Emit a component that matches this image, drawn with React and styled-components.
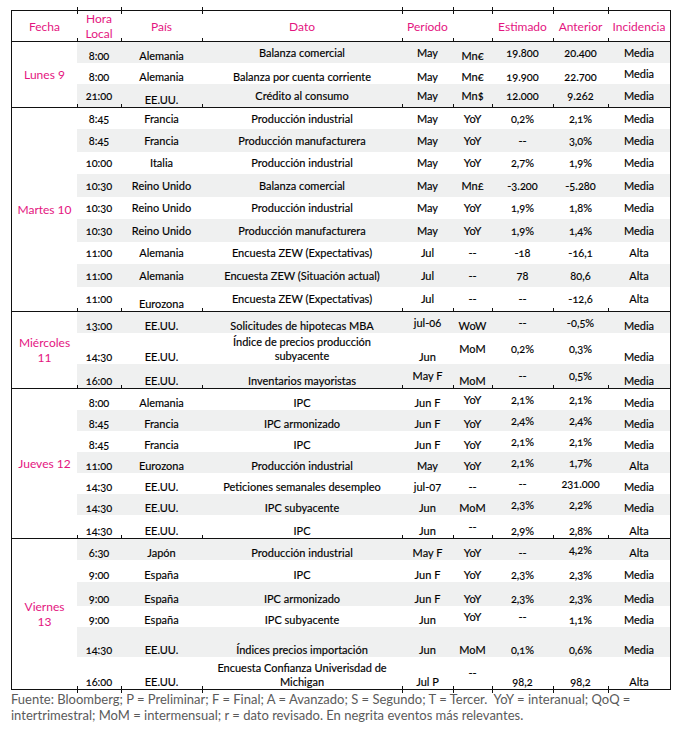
import React from "react";
import styled, { createGlobalStyle } from "styled-components";

const GlobalStyle = createGlobalStyle`
  body {
    margin: 0;
    background: #fff;
    font-family: Lato, "Open Sans", sans-serif;
  }
`;

const COLS = "65px 44px 81px 200px 51px 39px 61px 55px 62px";
const PINK = "#e4157f";

const Page = styled.div`
  padding: 10px 0 0 11px;
`;

const Table = styled.div`
  width: 658px;
  border-left: 1px solid #111;
  border-right: 1px solid #111;
`;

const Rule = styled.div`
  display: grid;
  grid-template-columns: ${COLS};
  grid-template-rows: 1px;
  height: 1px;
  background: #111;
`;

const Mark = styled.span`
  height: 7px;
  margin-top: -3px;
  border-left: 1px solid #111;
`;

const Header = styled.div`
  display: grid;
  grid-template-columns: ${COLS};
  height: 30px;
`;

const HeadCell = styled.div`
  display: flex;
  align-items: center;
  justify-content: center;
  text-align: center;
  color: ${PINK};
  font-size: 12px;
  line-height: 15px;
`;

const Group = styled.div`
  display: flex;
`;

const DayCell = styled.div`
  width: 65px;
  flex: none;
  display: flex;
  align-items: center;
  justify-content: center;
  text-align: center;
  color: ${PINK};
  font-size: 12px;
  line-height: 15px;
`;

const Rows = styled.div`
  flex: 1;
  display: flex;
  flex-direction: column;
`;

const Row = styled.div`
  display: grid;
  grid-template-columns: 44px 81px 200px 51px 39px 61px 55px 62px;
  height: ${(p) => p.$h}px;
  background: ${(p) => (p.$shade ? "#eff0f0" : "#fff")};
`;

const Cell = styled.div`
  align-self: ${(p) => (p.$bottom ? "end" : "center")};
  text-align: center;
  font-size: 11px;
  line-height: 14px;
  color: #000;
  -webkit-text-stroke: 0.15px #000;
  white-space: nowrap;
  font-variant-numeric: oldstyle-nums;
`;

const Note = styled.p`
  margin: 1px 0 0;
  font-size: 13px;
  line-height: 16px;
  color: #5a5a5a;
`;

const ALL = [0, 1, 2, 3, 4, 5, 6, 7];
const except = (...xs) => ALL.filter((i) => !xs.includes(i));

const days = [
  {
    label: ["Lunes 9"],
    rows: [
      { h: 21, c: ["8:00", "Alemania", "Balanza comercial", "May", "Mn€", "19.800", "20.400", "Media"], b: [0, 1, 4] },
      { h: 21, c: ["8:00", "Alemania", "Balanza por cuenta corriente", "May", "Mn€", "19.900", "22.700", "Media"], b: [0, 1, 2, 3, 4, 5, 6] },
      { h: 23, c: ["21:00", "EE.UU.", "Crédito al consumo", "May", "Mn$", "12.000", "9.262", "Media"], b: [1] },
    ],
  },
  {
    label: ["Martes 10"],
    rows: [
      { h: 21, c: ["8:45", "Francia", "Producción industrial", "May", "YoY", "0,2%", "2,1%", "Media"], b: [] },
      { h: 23, c: ["8:45", "Francia", "Producción manufacturera", "May", "YoY", "--", "3,0%", "Media"], b: [] },
      { h: 22, c: ["10:00", "Italia", "Producción industrial", "May", "YoY", "2,7%", "1,9%", "Media"], b: [] },
      { h: 23, c: ["10:30", "Reino Unido", "Balanza comercial", "May", "Mn£", "-3.200", "-5.280", "Media"], b: [] },
      { h: 22, c: ["10:30", "Reino Unido", "Producción industrial", "May", "YoY", "1,9%", "1,8%", "Media"], b: [] },
      { h: 23, c: ["10:30", "Reino Unido", "Producción manufacturera", "May", "YoY", "1,9%", "1,4%", "Media"], b: [] },
      { h: 22, c: ["11:00", "Alemania", "Encuesta ZEW (Expectativas)", "Jul", "--", "-18", "-16,1", "Alta"], b: [] },
      { h: 23, c: ["11:00", "Alemania", "Encuesta ZEW (Situación actual)", "Jul", "--", "78", "80,6", "Alta"], b: [] },
      { h: 24, c: ["11:00", "Eurozona", "Encuesta ZEW (Expectativas)", "Jul", "--", "--", "-12,6", "Alta"], b: [1] },
    ],
  },
  {
    label: ["Miércoles", "11"],
    rows: [
      { h: 21, c: ["13:00", "EE.UU.", "Solicitudes de hipotecas MBA", "jul-06", "WoW", "--", "-0,5%", "Media"], b: [0, 1, 2, 4, 7] },
      { h: 31, c: ["14:30", "EE.UU.", ["Índice de precios producción", "subyacente"], "Jun", "MoM", "0,2%", "0,3%", "Media"], b: [0, 1, 3, 7] },
      { h: 24, c: ["16:00", "EE.UU.", "Inventarios mayoristas", "May F", "MoM", "--", "0,5%", "Media"], b: [0, 1, 2, 4, 7] },
    ],
  },
  {
    label: ["Jueves 12"],
    rows: [
      { h: 21, c: ["8:00", "Alemania", "IPC", "Jun F", "YoY", "2,1%", "2,1%", "Media"], b: [0, 1, 2, 3, 7] },
      { h: 21, c: ["8:45", "Francia", "IPC armonizado", "Jun F", "YoY", "2,4%", "2,4%", "Media"], b: except(5, 6) },
      { h: 21, c: ["8:45", "Francia", "IPC", "Jun F", "YoY", "2,1%", "2,1%", "Media"], b: except(5, 6) },
      { h: 21, c: ["11:00", "Eurozona", "Producción industrial", "May", "YoY", "2,1%", "1,7%", "Alta"], b: except(5, 6) },
      { h: 21, c: ["14:30", "EE.UU.", "Peticiones semanales desempleo", "jul-07", "--", "--", "231.000", "Media"], b: except(5, 6) },
      { h: 21, c: ["14:30", "EE.UU.", "IPC subyacente", "Jun", "MoM", "2,3%", "2,2%", "Media"], b: except(5, 6) },
      { h: 23, c: ["14:30", "EE.UU.", "IPC", "Jun", "--", "2,9%", "2,8%", "Alta"], b: except(4) },
    ],
  },
  {
    label: ["Viernes", "13"],
    rows: [
      { h: 21, c: ["6:30", "Japón", "Producción industrial", "May F", "YoY", "--", "4,2%", "Alta"], b: except(6) },
      { h: 22, c: ["9:00", "España", "IPC", "Jun F", "YoY", "2,3%", "2,3%", "Media"], b: ALL },
      { h: 24, c: ["9:00", "España", "IPC armonizado", "Jun F", "YoY", "2,3%", "2,3%", "Media"], b: ALL },
      { h: 21, c: ["9:00", "España", "IPC subyacente", "Jun", "YoY", "--", "1,1%", "Media"], b: except(4, 5) },
      { h: 30, c: ["14:30", "EE.UU.", "Índices precios importación", "Jun", "MoM", "0,1%", "0,6%", "Media"], b: ALL },
      { h: 32, c: ["16:00", "EE.UU.", ["Encuesta Confianza Univerisdad de", "Michigan"], "Jul P", "--", "98,2", "98,2", "Alta"], b: except(4) },
    ],
  },
];

const heads = [["Fecha"], ["Hora", "Local"], ["País"], ["Dato"], ["Período"], [""], ["Estimado"], ["Anterior"], ["Incidencia"]];

const Lines = ({ parts }) =>
  parts.map((t, i) => (
    <React.Fragment key={i}>
      {i > 0 && <br />}
      {t}
    </React.Fragment>
  ));

const Ticks = () => (
  <Rule>
    <span />
    {ALL.map((i) => (
      <Mark key={i} />
    ))}
  </Rule>
);

export default function App() {
  let n = 0;
  return (
    <Page>
      <GlobalStyle />
      <Table>
        <Ticks />
        <Header>
          {heads.map((h, i) => (
            <HeadCell key={i}>
              <span>
                <Lines parts={h} />
              </span>
            </HeadCell>
          ))}
        </Header>
        {days.map((day) => (
          <React.Fragment key={day.label.join(" ")}>
            <Ticks />
            <Group>
              <DayCell>
                <span>
                  <Lines parts={day.label} />
                </span>
              </DayCell>
              <Rows>
                {day.rows.map((r, ri) => {
                  const shade = n % 2 === 0;
                  n += 1;
                  return (
                    <Row key={ri} $h={r.h} $shade={shade}>
                      {r.c.map((v, ci) => (
                        <Cell key={ci} $bottom={r.b.includes(ci)}>
                          {Array.isArray(v) ? <Lines parts={v} /> : v}
                        </Cell>
                      ))}
                    </Row>
                  );
                })}
              </Rows>
            </Group>
          </React.Fragment>
        ))}
        <Ticks />
      </Table>
      <Note>
        Fuente: Bloomberg; P = Preliminar; F = Final; A = Avanzado; S = Segundo; T = Tercer.&nbsp; YoY = interanual; QoQ =
        <br />
        intertrimestral; MoM = intermensual; r = dato revisado. En negrita eventos más relevantes.
      </Note>
    </Page>
  );
}
